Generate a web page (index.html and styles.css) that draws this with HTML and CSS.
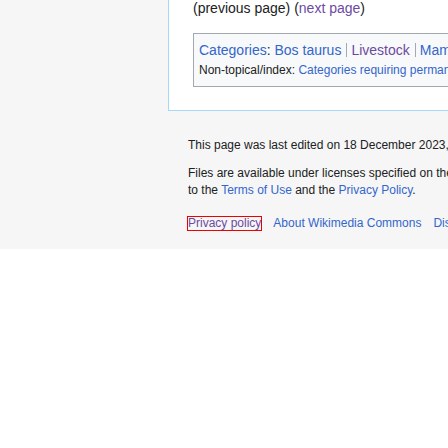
FILE: index.html
```html
<!DOCTYPE html>
<html lang="en">
<head>
<meta charset="utf-8">
<title>Category</title>
<link rel="stylesheet" href="styles.css">
</head>
<body>
<div class="page">
  <main class="panel">
    <p class="pager">(previous page) (<a class="visited" href="#">next page</a>)</p>
    <div class="catlinks">
      <div class="cat-normal">
        <a href="#">Categories</a>: <ul class="cat-list"><li><a href="#">Bos taurus</a></li><li><a class="visited" href="#">Livestock</a></li><li><a href="#">Mammals</a></li></ul>
      </div>
      <div class="cat-hidden">
        Non-topical/index: <ul class="cat-list"><li><a href="#">Categories requiring permanent categorization</a></li></ul>
      </div>
    </div>
  </main>
  <footer class="footer">
    <p class="footer-info">This page was last edited on 18 December 2023, at 10:12.</p>
    <p class="footer-info">Files are available under licenses specified on their description page. All structured data from the file namespace is available under the Creative Commons CC0 License; all unstructured text is available under the Creative Commons Attribution-ShareAlike License; additional terms may apply. By using this site, you agree<br>to the <a href="#">Terms of Use</a> and the <a href="#">Privacy Policy</a>.</p>
    <ul class="places">
      <li><a class="visited focused" href="#">Privacy policy</a></li>
      <li><a href="#">About Wikimedia Commons</a></li>
      <li><a href="#">Disclaimers</a></li>
    </ul>
  </footer>
</div>
</body>
</html>
```
FILE: styles.css
```css
html, body {
  margin: 0;
  padding: 0;
  background: #ffffff;
  overflow: hidden;
}

body {
  font-family: "Liberation Sans", Arial, sans-serif;
  color: #202122;
}

a {
  color: #3366cc;
  text-decoration: none;
}

a.visited {
  color: #6b4ba1;
}

.page {
  background: #f6f6f6;
  overflow: hidden;
}

.panel {
  display: block;
  margin-left: 168px;
  width: 1400px;
  background: #ffffff;
  border-left: 1px solid #a7d7f9;
  border-bottom: 1px solid #a7d7f9;
  padding: 0 0 23px 24px;
}

.pager {
  margin: 0;
  font-size: 14px;
  line-height: 16px;
  white-space: nowrap;
}

.catlinks {
  margin-top: 17px;
  border: 1px solid #a2a9b1;
  background: #f8f9fa;
  padding: 5px 5px 6px 5px;
  white-space: nowrap;
}

.cat-normal {
  font-size: 14px;
  line-height: 22px;
}

.cat-hidden {
  font-size: 12px;
  line-height: 19px;
}

.cat-list {
  display: inline;
  margin: 0;
  padding: 0;
  list-style: none;
}

.cat-list li {
  display: inline-block;
  line-height: 14px;
  padding: 0 5px 0 4px;
  border-left: 1px solid #a2a9b1;
}

.cat-list li:first-child {
  padding-left: 0;
  border-left: none;
}

.footer {
  display: block;
  padding: 26px 0 17px 188px;
  font-size: 12px;
  line-height: 17px;
  white-space: nowrap;
}

.footer-info {
  margin: 0 0 11px 0;
}

.places {
  margin: 16px 0 0 0;
  padding: 0;
  list-style: none;
  display: flex;
  gap: 12px;
}

.places a.focused {
  display: inline-block;
  line-height: 13px;
  outline: 1px solid #ee0000;
}
```
